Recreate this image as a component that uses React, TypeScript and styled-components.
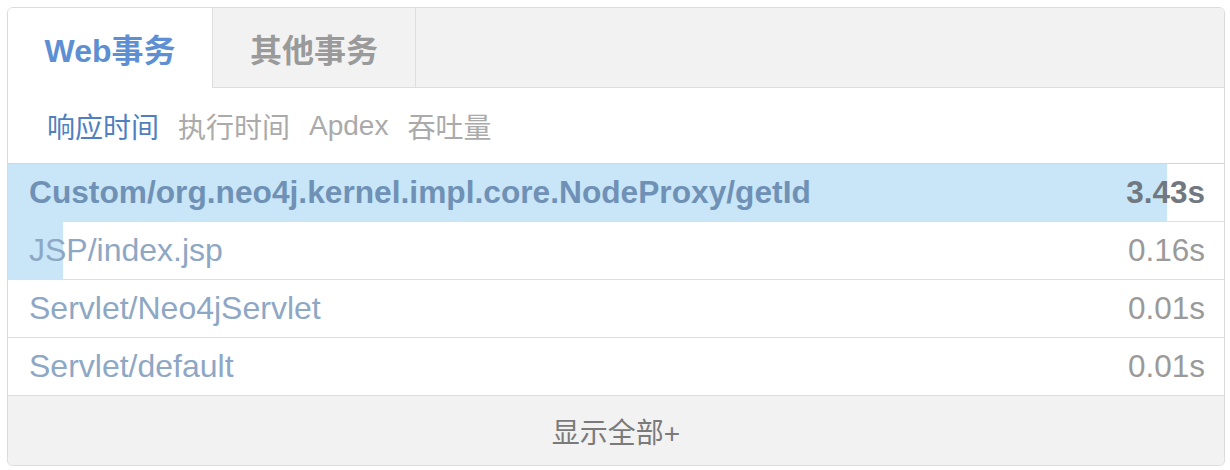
import React from "react";
import styled, { createGlobalStyle } from "styled-components";

const Global = createGlobalStyle`
  html, body { margin: 0; padding: 0; background: #fff; }
  body { font-family: "Liberation Sans", "Noto Sans CJK SC", Arial, sans-serif; }
`;

const Page = styled.div`
  padding: 7px 5px 0 7px;
`;

const Panel = styled.div`
  width: 1216px;
  border: 1px solid #dcdcdc;
  border-radius: 6px;
  overflow: hidden;
  background: #fff;
  box-shadow: 0 1px 2px rgba(0, 0, 0, 0.06);
`;

const TabBar = styled.div`
  display: flex;
  height: 79px;
  background: #f2f2f2;
  border-bottom: 1px solid #dedede;
`;

const Tab = styled.div<{ $active?: boolean }>`
  width: ${(p) => (p.$active ? 205 : 203)}px;
  display: flex;
  align-items: center;
  justify-content: center;
  box-sizing: border-box;
  font-size: 32px;
  font-weight: bold;
  color: ${(p) => (p.$active ? "#5d8fd2" : "#9a9a9a")};
  background: ${(p) => (p.$active ? "#fff" : "#f2f2f2")};
  border-right: 1px solid #dedede;
  margin-bottom: ${(p) => (p.$active ? "-1px" : "0")};
`;

const SubTabs = styled.div`
  display: flex;
  align-items: center;
  gap: 19px;
  height: 76px;
  padding-left: 39px;
  box-sizing: border-box;
  border-bottom: 1px solid #bfdcec;
`;

const SubTab = styled.span<{ $active?: boolean }>`
  font-size: 28px;
  color: ${(p) => (p.$active ? "#4f7fbf" : "#aaaaaa")};
`;

const Row = styled.div`
  position: relative;
  height: 58px;
  border-bottom: 1px solid #dedede;
  box-sizing: border-box;
`;

const Bar = styled.div`
  position: absolute;
  left: 0;
  top: 0;
  bottom: 0;
  background: #c8e6f7;
`;

const RowContent = styled.div<{ $bold?: boolean }>`
  position: relative;
  display: flex;
  align-items: center;
  justify-content: space-between;
  height: 100%;
  padding: 0 19px 0 21px;
  font-size: ${(p) => (p.$bold ? 31.7 : 32)}px;
  font-weight: ${(p) => (p.$bold ? "bold" : "normal")};
`;

const Name = styled.span<{ $bold?: boolean }>`
  color: ${(p) => (p.$bold ? "#7091b6" : "#8ea7c4")};
`;

const Value = styled.span<{ $bold?: boolean }>`
  font-size: 31.5px;
  color: ${(p) => (p.$bold ? "#72787f" : "#9a9a9a")};
`;

const Footer = styled.div`
  height: 69px;
  display: flex;
  align-items: center;
  justify-content: center;
  background: #f2f2f2;
  font-size: 28px;
  color: #7a7a7a;
`;

const rows = [
  { name: "Custom/org.neo4j.kernel.impl.core.NodeProxy/getId", value: "3.43s", pct: 95.3, bold: true },
  { name: "JSP/index.jsp", value: "0.16s", pct: 4.5, bold: false },
  { name: "Servlet/Neo4jServlet", value: "0.01s", pct: 0, bold: false },
  { name: "Servlet/default", value: "0.01s", pct: 0, bold: false },
];

export default function App() {
  return (
    <Page>
      <Global />
      <Panel>
        <TabBar>
          <Tab $active>Web事务</Tab>
          <Tab>其他事务</Tab>
        </TabBar>
        <SubTabs>
          <SubTab $active>响应时间</SubTab>
          <SubTab>执行时间</SubTab>
          <SubTab>Apdex</SubTab>
          <SubTab>吞吐量</SubTab>
        </SubTabs>
        {rows.map((r) => (
          <Row key={r.name}>
            {r.pct > 0 && <Bar style={{ width: `${r.pct}%` }} />}
            <RowContent $bold={r.bold}>
              <Name $bold={r.bold}>{r.name}</Name>
              <Value $bold={r.bold}>{r.value}</Value>
            </RowContent>
          </Row>
        ))}
        <Footer>显示全部+</Footer>
      </Panel>
    </Page>
  );
}
